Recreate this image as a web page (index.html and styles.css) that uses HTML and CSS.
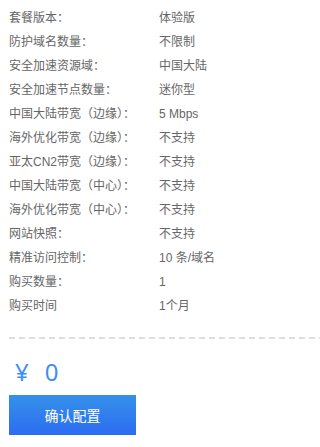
FILE: index.html
```html
<!DOCTYPE html>
<html lang="zh-CN">
<head>
<meta charset="utf-8">
<link rel="stylesheet" href="styles.css">
</head>
<body>
<div class="panel">
  <ul class="specs">
    <li class="row"><span class="label">套餐版本：</span><span class="value">体验版</span></li>
    <li class="row"><span class="label">防护域名数量：</span><span class="value">不限制</span></li>
    <li class="row"><span class="label">安全加速资源域：</span><span class="value">中国大陆</span></li>
    <li class="row"><span class="label">安全加速节点数量：</span><span class="value">迷你型</span></li>
    <li class="row"><span class="label">中国大陆带宽（边缘）：</span><span class="value">5 Mbps</span></li>
    <li class="row"><span class="label">海外优化带宽（边缘）：</span><span class="value">不支持</span></li>
    <li class="row"><span class="label">亚太CN2带宽（边缘）：</span><span class="value">不支持</span></li>
    <li class="row"><span class="label">中国大陆带宽（中心）：</span><span class="value">不支持</span></li>
    <li class="row"><span class="label">海外优化带宽（中心）：</span><span class="value">不支持</span></li>
    <li class="row"><span class="label">网站快照：</span><span class="value">不支持</span></li>
    <li class="row"><span class="label">精准访问控制：</span><span class="value">10 条/域名</span></li>
    <li class="row"><span class="label">购买数量：</span><span class="value">1</span></li>
    <li class="row"><span class="label">购买时间</span><span class="value">1个月</span></li>
  </ul>
  <div class="divider"></div>
  <div class="price"><span class="currency">¥</span><span class="amount">0</span></div>
  <button class="confirm" type="button">确认配置</button>
</div>
</body>
</html>
```

FILE: styles.css
```css
html, body {
  margin: 0;
  padding: 0;
  background: #ffffff;
}

body {
  font-family: "Liberation Sans", "Noto Sans CJK SC", sans-serif;
  color: #666666;
  font-size: 12px;
}

.panel {
  padding: 6px 0 0 9px;
}

.specs {
  list-style: none;
  margin: 0;
  padding: 0;
}

.row {
  display: flex;
  height: 24px;
  line-height: 24px;
  white-space: nowrap;
}

.label {
  width: 150px;
  flex: none;
}

.value {
  flex: none;
}

.divider {
  margin-top: 19px;
  height: 2px;
  background: repeating-linear-gradient(to right, #dddddd 0 6px, transparent 6px 10px);
}

.price {
  display: flex;
  align-items: center;
  gap: 16px;
  height: 32px;
  margin-top: 17px;
  padding-left: 6px;
  color: #3d8ef7;
  font-family: "Noto Sans", "Noto Sans CJK SC", sans-serif;
  font-size: 24px;
  line-height: 32px;
}

.confirm {
  display: block;
  margin-top: 7px;
  width: 127px;
  height: 40px;
  border: 0;
  padding: 0;
  background: linear-gradient(to bottom, #3591e9, #2c6cf2);
  color: #ffffff;
  font-family: "Noto Sans CJK SC", sans-serif;
  font-size: 14px;
  cursor: pointer;
}
```
